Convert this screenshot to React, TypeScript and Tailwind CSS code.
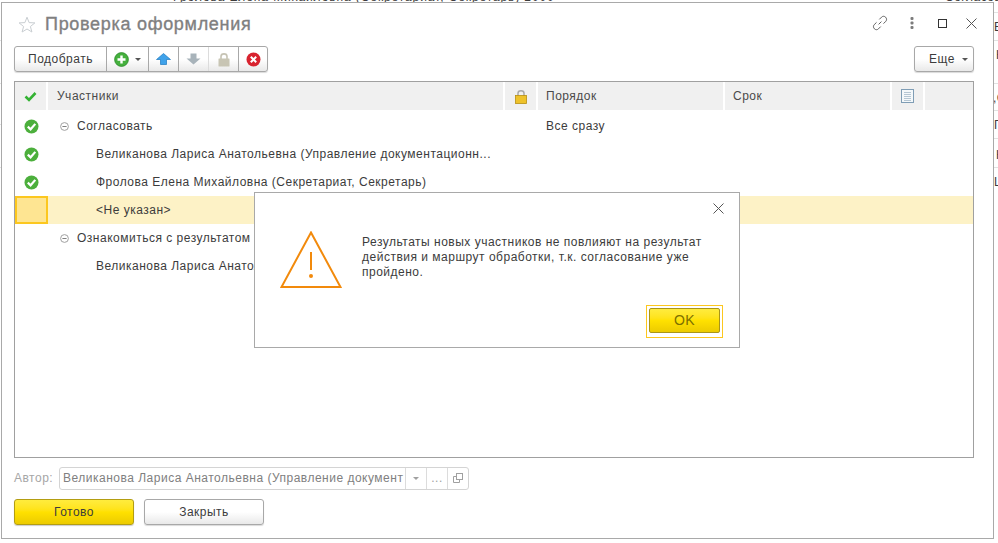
import React from "react";

function CheckDot() {
  return (
    <svg width="15" height="15" viewBox="0 0 15 15">
      <circle cx="7.5" cy="7.5" r="7" fill="#4caf3c" />
      <path d="M3.8 7.6 L6.6 10.3 L11.3 4.9" fill="none" stroke="#fff" strokeWidth="2.2" />
    </svg>
  );
}

function Collapse() {
  return (
    <svg width="9" height="9" viewBox="0 0 9 9" className="shrink-0">
      <circle cx="4.5" cy="4.5" r="3.9" fill="none" stroke="#a0a0a0" />
      <path d="M2.4 4.5 H6.6" stroke="#808080" />
    </svg>
  );
}

function ToolCell({ children, className = "" }: { children: React.ReactNode; className?: string }) {
  return <div className={`flex items-center justify-center h-full border-r border-[#a8a8a8] ${className}`}>{children}</div>;
}

function HeadCell({ w, children, className = "" }: { w: string; children?: React.ReactNode; className?: string }) {
  return <div className={`${w} h-full flex items-center shrink-0 border-r-2 border-white ${className}`}>{children}</div>;
}

function Row({ mark, indent, children, selected, col3 }: { mark?: boolean; indent: "group" | "item"; children: React.ReactNode; selected?: boolean; col3?: string }) {
  return (
    <div className={`h-7 flex items-center ${selected ? "bg-[#fdf2c6]" : ""}`}>
      <div className={`w-[33px] h-full flex items-center justify-center shrink-0 ${selected ? "bg-[#fee592] border-2 border-[#fcc71f]" : ""}`}>
        {mark && <CheckDot />}
      </div>
      <div className={`w-[490px] shrink-0 flex items-center gap-[8px] whitespace-nowrap ${indent === "group" ? "pl-[12px]" : "pl-[48px]"}`}>
        {indent === "group" && <Collapse />}
        <span>{children}</span>
      </div>
      {col3 && <span className="pl-[8px]">{col3}</span>}
    </div>
  );
}

const gridLinesRight = [12, 40, 83, 110, 138, 167];
const gridLinesLeft = [40, 83, 124, 167];

export default function App() {
  return (
    <div className="relative w-[998px] h-[543px] overflow-hidden bg-white text-[12px] leading-[15px] tracking-[0.5px] text-[#3c3c3c] [font-family:'Liberation_Sans',Arial,sans-serif]">
      {/* page behind the window */}
      <span className="absolute left-[170px] top-[-10px] whitespace-nowrap tracking-[0.9px]">Фролова Елена Михайловна (Секретариат, Секретарь) 2000</span>
      <span className="absolute left-[945px] top-[-10px] whitespace-nowrap">Согласов</span>
      <span className="absolute left-[994px] top-[20px]">В</span>
      <span className="absolute left-[996px] top-[48px]">К</span>
      <span className="absolute left-[993px] top-[91px]">,С</span>
      <span className="absolute left-[994px] top-[118px]">Г</span>
      <span className="absolute left-[996px] top-[148px]">К</span>
      <span className="absolute left-[994px] top-[175px]">Ц</span>
      <span className="absolute left-[-7px] top-[21px]">н</span>
      <span className="absolute left-[-7px] top-[61px]">н</span>
      <span className="absolute left-[-7px] top-[91px]">е</span>
      {gridLinesRight.map((y) => (
        <div key={y} className="absolute left-[994px] w-[4px] h-px bg-[#e2e2e2]" style={{ top: y }} />
      ))}
      {gridLinesLeft.map((y) => (
        <div key={y} className="absolute left-0 w-px h-px bg-[#e2e2e2]" style={{ top: y }} />
      ))}

      {/* window */}
      <div className="absolute left-[1px] top-[2px] w-[993px] h-[537px] border border-[#a9a9a9] bg-white flex flex-col pl-[12px] pr-[19px]">
        {/* title */}
        <div className="h-[43px] shrink-0 flex items-center relative">
          <svg width="18" height="17" viewBox="0 0 18 17" className="ml-[4px] mt-[-1px]">
            <path d="M9 1.2 L11.1 6.6 L16.9 6.9 L12.4 10.5 L13.9 16 L9 13 L4.1 16 L5.6 10.5 L1.1 6.9 L6.9 6.6 Z" fill="#fff" stroke="#c9ced2" strokeWidth="1" />
          </svg>
          <span className="ml-[9px] text-[18px] tracking-[0.7px] [-webkit-text-stroke:0.35px_#808080] text-[#808080] leading-[22px] mt-[-1px]">Проверка оформления</span>
          <div className="ml-auto flex items-center mr-[-3px] mt-[-3px]">
            <svg width="16" height="16" viewBox="0 0 16 16" className="mr-[22px]" fill="none" stroke="#5f5f5f" strokeWidth="1">
              <path d="M6.6 9.4 L9.4 6.6" />
              <path d="M7.3 4.4 L9.6 2.1 C10.7 1 12.4 1 13.6 2.2 C14.8 3.4 14.9 5.2 13.8 6.3 L11.5 8.6" />
              <path d="M8.7 11.6 L6.4 13.9 C5.3 15 3.6 15 2.4 13.8 C1.2 12.6 1.1 10.8 2.2 9.7 L4.5 7.4" />
            </svg>
            <svg width="4" height="12" viewBox="0 0 4 12" className="mr-[24px]" fill="#7c7c7c">
              <rect x="0.5" y="0" width="3" height="3" rx="1" />
              <rect x="0.5" y="4.5" width="3" height="3" rx="1" />
              <rect x="0.5" y="9" width="3" height="3" rx="1" />
            </svg>
            <div className="w-[9px] h-[9px] border border-[#333] mr-[19px]" />
            <svg width="11" height="11" viewBox="0 0 11 11" stroke="#555" strokeWidth="1">
              <path d="M0.5 0.5 L10.5 10.5 M10.5 0.5 L0.5 10.5" />
            </svg>
          </div>
        </div>

        {/* toolbar */}
        <div className="h-[26px] shrink-0 flex justify-between">
          <div className="flex h-full w-[254px] border border-[#a8a8a8] rounded-[3px] bg-gradient-to-b from-white via-white to-[#e9e9e9] shadow-[0_1px_1px_rgba(0,0,0,0.15)]">
            <ToolCell className="w-[92px]">Подобрать</ToolCell>
            <ToolCell className="w-[42px] gap-[6px] pr-[1px]">
              <svg width="15" height="15" viewBox="0 0 15 15">
                <circle cx="7.5" cy="7.5" r="6.9" fill="#45b03d" stroke="#2c8c2c" strokeWidth="0.8" />
                <path d="M7.5 3.5 V11.5 M3.5 7.5 H11.5" stroke="#fff" strokeWidth="2.4" />
              </svg>
              <svg width="6" height="3" viewBox="0 0 6 3"><path d="M0 0 H6 L3 3 Z" fill="#555" /></svg>
            </ToolCell>
            <ToolCell className="w-[30px]">
              <svg width="15" height="12" viewBox="0 0 15 12">
                <path d="M7.5 0.5 L14.5 6.5 H10.5 V11.5 H4.5 V6.5 H0.5 Z" fill="#3fa2ea" stroke="#1c79c0" strokeWidth="0.7" />
              </svg>
            </ToolCell>
            <ToolCell className="w-[30px] border-[#dcdcdc]">
              <svg width="15" height="12" viewBox="0 0 15 12">
                <path d="M7.5 11.5 L14.5 5.5 H10.5 V0.5 H4.5 V5.5 H0.5 Z" fill="#a8b3ba" />
              </svg>
            </ToolCell>
            <ToolCell className="w-[30px]">
              <svg width="12" height="15" viewBox="0 0 12 15">
                <path d="M3 7 V4.5 C3 1 9 1 9 4.5 V7" fill="none" stroke="#c6c3b4" strokeWidth="1.6" />
                <rect x="0.5" y="6.5" width="11" height="8" rx="0.5" fill="#c8c5b4" />
              </svg>
            </ToolCell>
            <div className="flex-1 flex items-center justify-center">
              <svg width="15" height="15" viewBox="0 0 15 15">
                <circle cx="7.5" cy="7.5" r="7" fill="#d8232f" />
                <path d="M4.8 4.8 L10.2 10.2 M10.2 4.8 L4.8 10.2" stroke="#fff" strokeWidth="2" />
              </svg>
            </div>
          </div>
          <div className="h-full w-[60px] border border-[#a8a8a8] rounded-[3px] bg-gradient-to-b from-white via-white to-[#e9e9e9] shadow-[0_1px_1px_rgba(0,0,0,0.15)] flex items-center justify-end gap-[7px] pr-[5px]">
            <span>Еще</span>
            <svg width="6" height="3" viewBox="0 0 6 3"><path d="M0 0 H6 L3 3 Z" fill="#555" /></svg>
          </div>
        </div>

        {/* table */}
        <div className="mt-[9px] h-[377px] shrink-0 border border-[#a0a0a0] flex flex-col relative">
          <div className="h-[30px] shrink-0 bg-[#f0f0f0] border-b-2 border-white flex items-center text-[#4a4a4a]">
            <HeadCell w="w-[33px]" className="justify-center">
              <svg width="13" height="11" viewBox="0 0 13 11">
                <path d="M1.5 5.5 L5 9 L11.5 2" fill="none" stroke="#34b233" strokeWidth="2.6" />
              </svg>
            </HeadCell>
            <HeadCell w="w-[457px]" className="pl-[9px]">Участники</HeadCell>
            <HeadCell w="w-[33px]" className="justify-center">
              <svg width="12" height="15" viewBox="0 0 12 15">
                <path d="M3 7 V4.2 C3 0.8 9 0.8 9 4.2 V7" fill="none" stroke="#a9a9a9" strokeWidth="1.5" />
                <rect x="0.5" y="6.5" width="11" height="8" fill="#eec22b" stroke="#b78f12" strokeWidth="0.8" />
              </svg>
            </HeadCell>
            <HeadCell w="w-[187px]" className="pl-[8px]">Порядок</HeadCell>
            <HeadCell w="w-[167px]" className="pl-[8px]">Срок</HeadCell>
            <HeadCell w="w-[33px]" className="justify-center">
              <svg width="13" height="14" viewBox="0 0 13 14">
                <rect x="0.5" y="0.5" width="12" height="13" fill="#f4f8fa" stroke="#7f9db5" />
                <path d="M3 3.5 H10 M3 5.5 H10 M3 7.5 H10 M3 9.5 H10 M3 11.5 H10" stroke="#b5c6d3" />
              </svg>
            </HeadCell>
          </div>
          <Row mark indent="group" col3="Все сразу">Согласовать</Row>
          <Row mark indent="item">Великанова Лариса Анатольевна (Управление документационн...</Row>
          <Row mark indent="item">Фролова Елена Михайловна (Секретариат, Секретарь)</Row>
          <Row indent="item" selected>&lt;Не указан&gt;</Row>
          <Row indent="group">Ознакомиться с результатом</Row>
          <Row indent="item">Великанова Лариса Анатольевна</Row>
        </div>

        {/* author */}
        <div className="mt-[8px] h-[24px] shrink-0 flex items-center">
          <span className="w-[45px] text-[#a6a6a6]">Автор:</span>
          <div className="w-[410px] h-[23px] border border-[#d4d4d4] rounded-[3px] flex items-center text-[#808080]">
            <div className="w-[345px] pl-[3px] overflow-hidden whitespace-nowrap shrink-0">Великанова Лариса Анатольевна (Управление документ</div>
            <div className="w-[21px] h-full border-l border-[#dcdcdc] flex items-center justify-center shrink-0">
              <svg width="6" height="3" viewBox="0 0 6 3"><path d="M0 0 H6 L3 3 Z" fill="#a0a0a0" /></svg>
            </div>
            <div className="w-[21px] h-full border-l border-[#dcdcdc] flex items-end justify-center pb-[5px] shrink-0 text-[#a0a0a0] leading-none">...</div>
            <div className="flex-1 h-full border-l border-[#dcdcdc] flex items-center justify-center">
              <svg width="10" height="10" viewBox="0 0 10 10" fill="none" stroke="#a0a0a0">
                <rect x="3.5" y="0.5" width="6" height="6" />
                <path d="M3.5 3.5 H0.5 V9.5 H6.5 V6.5" />
              </svg>
            </div>
          </div>
        </div>

        {/* buttons */}
        <div className="mt-[9px] h-[26px] shrink-0 flex gap-[10px]">
          <div className="w-[120px] h-full rounded-[3px] border border-[#b39d12] bg-gradient-to-b from-[#ffec3d] via-[#ffe100] to-[#eccb00] flex items-center justify-center shadow-[0_1px_1px_rgba(0,0,0,0.2)]">Готово</div>
          <div className="w-[120px] h-full rounded-[3px] border border-[#a8a8a8] bg-gradient-to-b from-white via-white to-[#e9e9e9] flex items-center justify-center shadow-[0_1px_1px_rgba(0,0,0,0.15)]">Закрыть</div>
        </div>
      </div>

      {/* dialog */}
      <div className="absolute left-[254px] top-[192px] w-[486px] h-[156px] border border-[#a9a9a9] bg-white flex flex-col pl-[25px] pr-[17px]">
        <div className="flex justify-end pt-[10px] h-[38px] shrink-0 mr-[-2px]">
          <svg width="11" height="11" viewBox="0 0 11 11" stroke="#555" strokeWidth="1">
            <path d="M0.5 0.5 L10.5 10.5 M10.5 0.5 L0.5 10.5" />
          </svg>
        </div>
        <div className="flex gap-[20px]">
          <svg width="62" height="58" viewBox="0 0 62 58" className="shrink-0">
            <path d="M31 1.5 L60.5 56 H1.5 Z" fill="none" stroke="#f28a0c" strokeWidth="2" strokeLinejoin="miter" />
            <path d="M31 21 V39" stroke="#f28a0c" strokeWidth="2" />
            <circle cx="31" cy="45" r="2" fill="#f28a0c" />
          </svg>
          <div className="pt-[4px] w-[345px]">Результаты новых участников не повлияют на результат действия и маршрут обработки, т.к. согласование уже пройдено.</div>
        </div>
        <div className="mt-auto mb-[9px] self-end w-[77px] h-[33px] border border-[#fcc71f] p-[2px] mr-[-1px]">
          <div className="w-full h-[25px] rounded-[2px] border border-[#a8941a] bg-gradient-to-b from-[#ffec3d] via-[#ffe100] to-[#eccb00] flex items-center justify-center text-[#7d7000] text-[14px]">OK</div>
        </div>
      </div>
    </div>
  );
}
